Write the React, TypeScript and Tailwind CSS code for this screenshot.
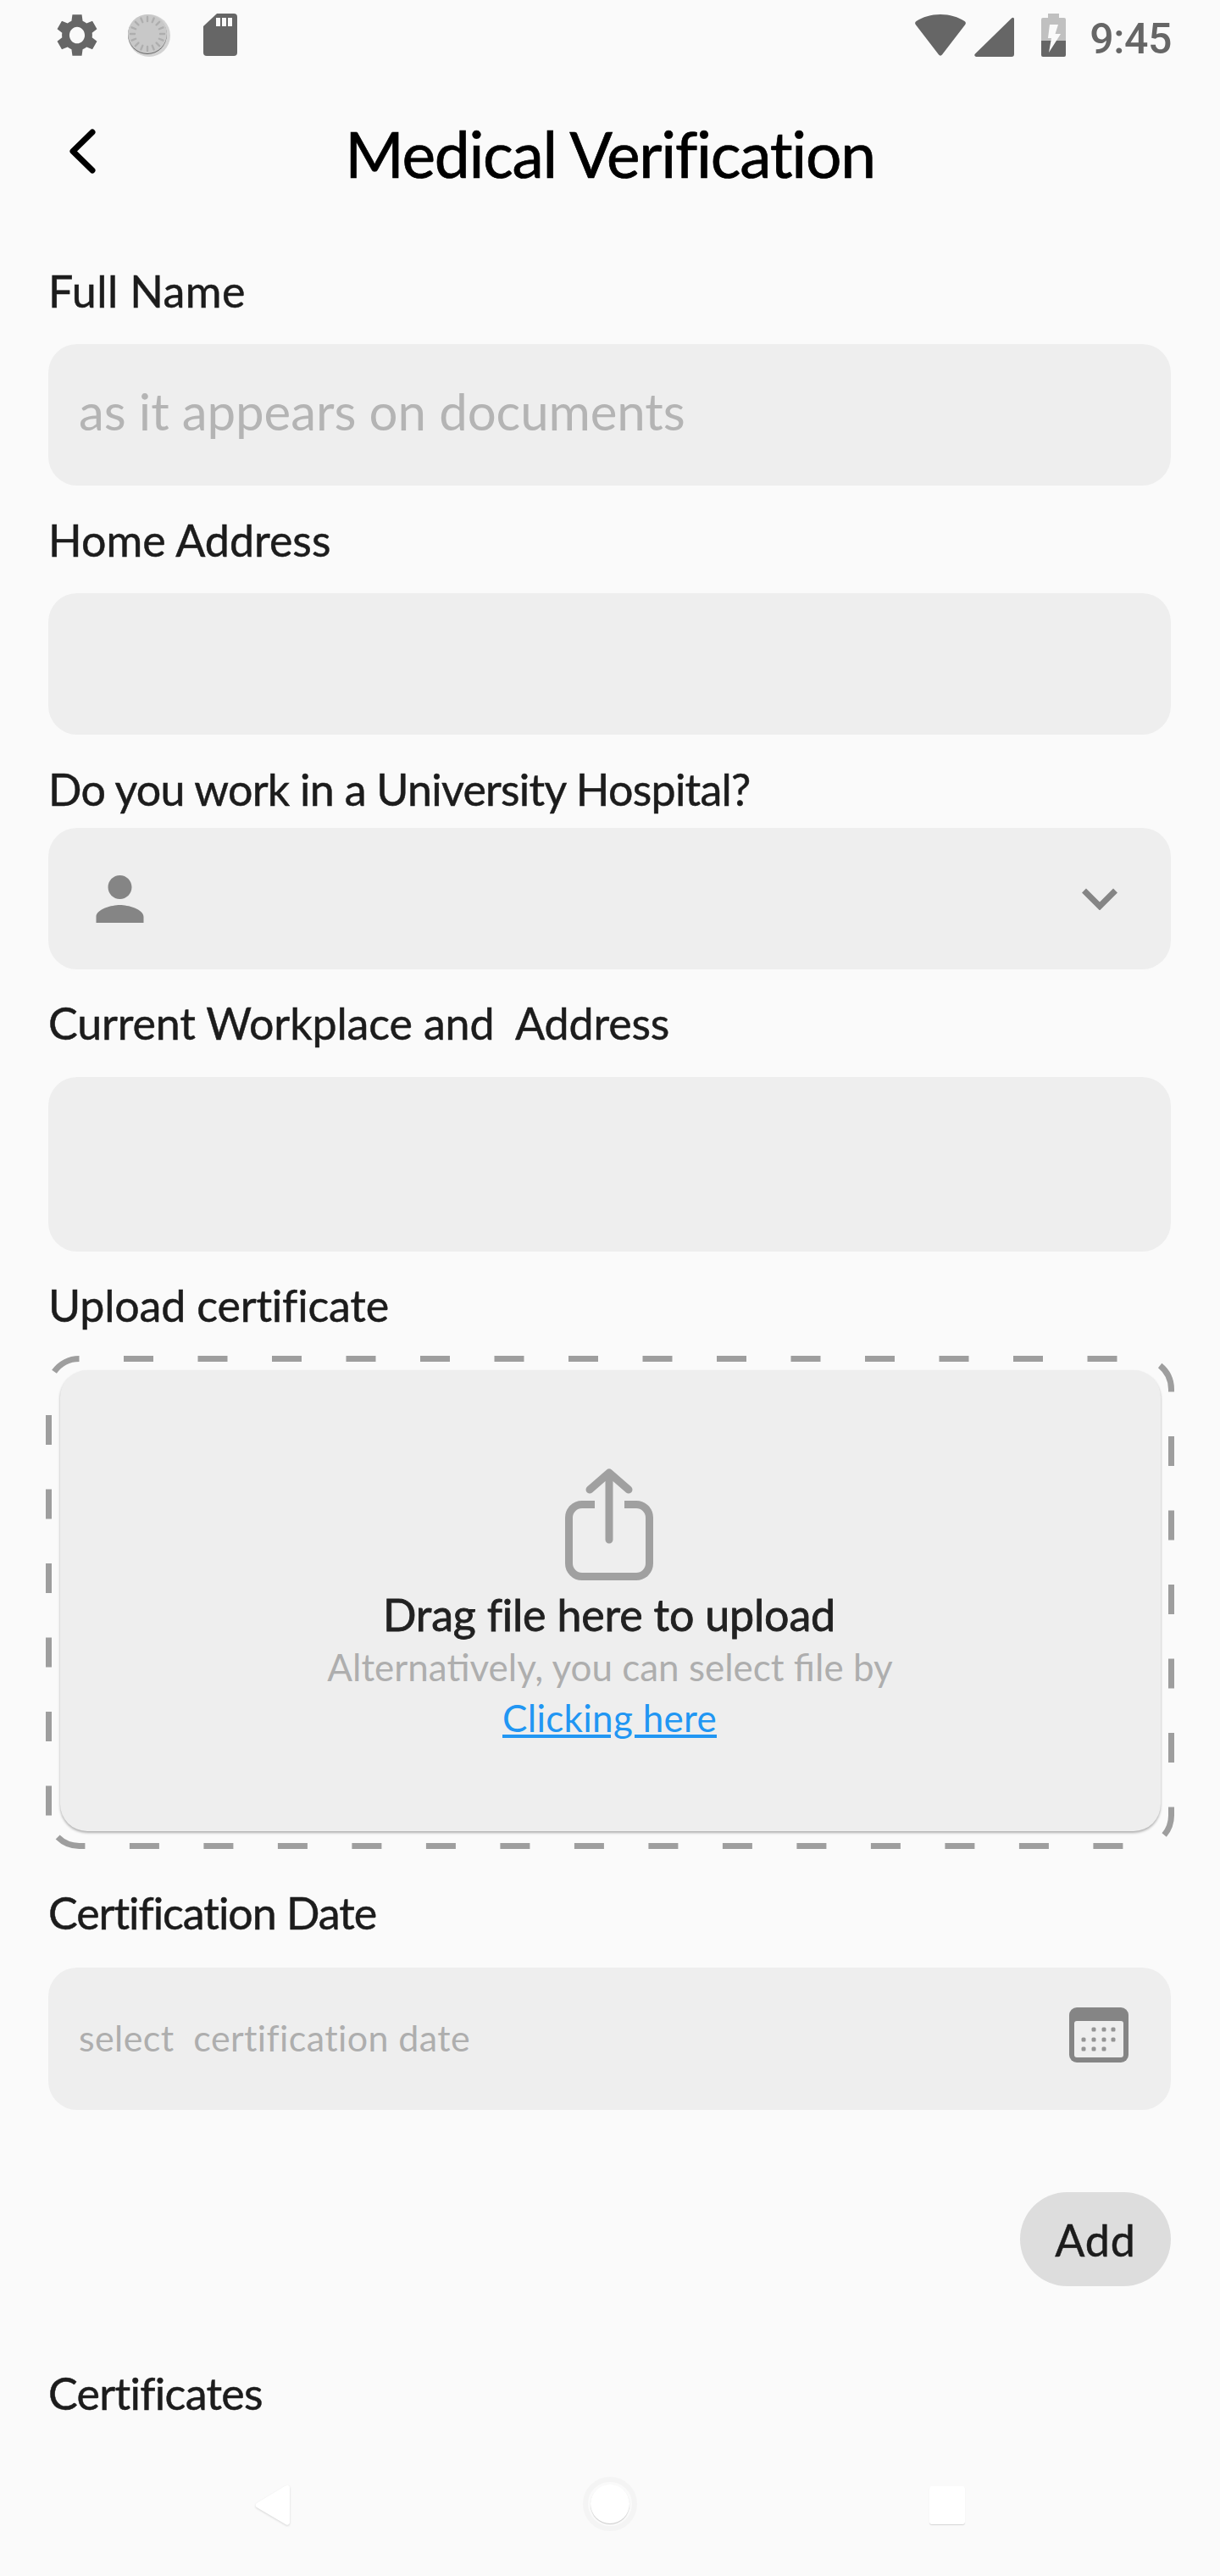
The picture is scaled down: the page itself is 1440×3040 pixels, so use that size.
const font = "font-['Lato','Liberation_Sans',sans-serif]";

function Label({ children, className = "" }: { children: React.ReactNode; className?: string }) {
  return <div className={`text-[52px] leading-[60px] [-webkit-text-stroke:0.5px_#1c1c1c] text-[#1c1c1c] whitespace-pre ${className}`}>{children}</div>;
}

function StatusBar() {
  return (
    <div className="flex items-start justify-between h-[84px] pl-[66px] pr-[57px] pt-[16px]">
      <div className="flex items-start">
        <svg width="50" height="51" viewBox="1 1 22 22.5" className="fill-[#666666]">
          <path fillRule="evenodd" d="M19.800 13.450c.05-.4.1-.8.1-1.200s-.05-.8-.1-1.200l2.550-2-2.400-4.200-3 1.200c-.65-.5-1.300-.9-2.050-1.200L14.450 1.600h-4.900l-.45 3.250c-.75.3-1.450.7-2.050 1.200l-3-1.200-2.400 4.200 2.550 2c-.05.4-.1.8-.1 1.200s.05.8.1 1.200L1.650 15.450l2.400 4.200 3-1.200c.65.5 1.300.9 2.050 1.200l.45 3.250h4.900l.45-3.250c.75-.3 1.450-.7 2.050-1.200l3 1.200 2.400-4.200-2.550-2zM12 16.600c-2.200 0-4-1.950-4-4.350s1.800-4.350 4-4.350 4 1.950 4 4.350-1.800 4.350-4 4.350z" />
        </svg>
        <svg width="52" height="52" viewBox="0 0 52 52" className="ml-[34px]">
          <circle cx="26" cy="26" r="25" fill="#d2d2d2" />
          <circle cx="24" cy="25" r="23" fill="#666666" />
          <circle cx="24" cy="24" r="23" fill="#c8c8c8" />
          {Array.from({ length: 16 }).map((_, i) => (
            <line key={i} x1="24" y1="4" x2="24" y2="9" stroke="#aeaeae" strokeWidth="2.400" strokeLinecap="round" transform={`rotate(${i * 22.5} 24 24)`} />
          ))}
        </svg>
        <svg width="40" height="50" viewBox="0 0 40 50" className="ml-[38px]">
          <path d="M16 0h20a4 4 0 0 1 4 4v42a4 4 0 0 1-4 4H4a4 4 0 0 1-4-4V15z" fill="#666666" />
          <rect x="15" y="5" width="5" height="10" fill="#fafafa" />
          <rect x="22" y="5" width="5" height="10" fill="#fafafa" />
          <rect x="29" y="5" width="5" height="10" fill="#fafafa" />
        </svg>
      </div>
      <div className="flex items-start">
        <svg width="60" height="49" viewBox="0 0 60 49" className="mt-[1px]">
          <path d="M30 0c11 0 21 3 28.500 8 1.500 1 1.800 2.500.8 4L32 47.500c-1 1.500-3 1.500-4 0L.7 12c-1-1.500-.7-3 .8-4C9 3 19 0 30 0z" fill="#666666" />
        </svg>
        <svg width="47" height="47" viewBox="0 0 47 47" className="ml-[10px] mt-[4px]">
          <path d="M44 1.500c1.500-1.500 3-.5 3 1V44a3 3 0 0 1-3 3H2.500C.5 47-.5 45 1 43.500z" fill="#666666" />
        </svg>
        <svg width="29" height="51" viewBox="0 0 29 51" className="ml-[32px]">
          <path d="M8 0h13v5h6a2 2 0 0 1 2 2v25H0V7a2 2 0 0 1 2-2h6z" fill="#c0c0c0" />
          <path d="M0 32h29v17a2 2 0 0 1-2 2H2a2 2 0 0 1-2-2z" fill="#666666" />
          <path d="M10 13h10l-3.500 11H23L9 46l3-17H8z" fill="#fafafa" />
        </svg>
        <span className="ml-[28px] text-[50px] leading-[60px] font-medium text-[#666666] font-['Roboto',sans-serif] tracking-[-0.4px]">9:45</span>
      </div>
    </div>
  );
}

function Field({ className = "", children }: { className?: string; children?: React.ReactNode }) {
  return <div className={`bg-[#eeeeee] rounded-[34px] ${className}`}>{children}</div>;
}

export default function App() {
  return (
    <div className={`relative flex flex-col h-[3040px] w-[1440px] overflow-hidden bg-[#fafafa] ${font}`}>
      <StatusBar />
      <div className="relative flex items-center justify-center h-[198px] pb-[4px]">
        <svg width="33" height="53" viewBox="0 0 33 53" className="absolute left-[81px] top-[68px]">
          <path d="M28 4 5 26.500 28 49" fill="none" stroke="#000" strokeWidth="7" strokeLinecap="round" strokeLinejoin="round" />
        </svg>
        <div className="text-[75px] leading-[80px] tracking-[-1.3px] [-webkit-text-stroke:0.7px_#000] text-black">Medical Verification</div>
      </div>
      <div className="flex flex-col pl-[57px] pr-[58px]">
        <Label className="mt-[31px] tracking-[0.4px]">Full Name</Label>
        <Field className="h-[167px] mt-[33px] pl-[36px] pb-[9px] flex items-center">
          <span className="text-[60px] tracking-[-0.1px] text-[#b4b4b4] leading-[70px]">as it appears on documents</span>
        </Field>
        <Label className="mt-[34px] tracking-[0px]">Home Address</Label>
        <Field className="h-[167px] mt-[33px]" />
        <Label className="mt-[34px] tracking-[-0.75px]">Do you work in a University Hospital?</Label>
        <Field className="h-[167px] mt-[16px] flex items-center justify-between pl-[56px] pr-[63px]">
          <svg width="57" height="56" viewBox="4 4 16 16" className="fill-[#858585]">
            <path d="M12 12c2.210 0 4-1.790 4-4s-1.790-4-4-4-4 1.790-4 4 1.790 4 4 4zm0 2c-2.670 0-8 1.340-8 4v2h16v-2c0-2.660-5.330-4-8-4z" />
          </svg>
          <svg width="42" height="26" viewBox="0 0 42 26">
            <path d="M2.500 3 21 21.500 39.500 3" fill="none" stroke="#858585" strokeWidth="7" />
          </svg>
        </Field>
        <Label className="mt-[33px] mb-[1px] tracking-[-0.15px]">Current Workplace and  Address</Label>
        <Field className="h-[206px] mt-[33px]" />
        <Label className="mt-[33px] tracking-[-0.2px]">Upload certificate</Label>
        <div className="relative mt-[30px] h-[582px] ml-[-3px] mr-[-4px]">
          <svg className="absolute left-0 top-0" width="1332" height="582" viewBox="54 1599 1332 582">
            <path d="M146 1602.500H1346.500a36 36 0 0 1 36 36V2141.500a36 36 0 0 1-36 36H93.500a36 36 0 0 1-36-36" fill="none" stroke="#9e9e9e" strokeWidth="7" strokeDasharray="35 52.500" />
            <path d="M57.500 2141.500V1638.500a36 36 0 0 1 36-36" fill="none" stroke="#9e9e9e" strokeWidth="7" strokeDasharray="35 52.500" />
          </svg>
          <div className="absolute left-[17px] right-[16px] top-[17px] bottom-[21px] bg-[#eeeeee] rounded-[32px] shadow-[0_2px_3px_rgba(0,0,0,0.3)] flex flex-col items-center pt-[116px]">
            <svg width="104" height="132" viewBox="0 0 104 132" className="mr-[3px]">
              <path d="M35 42.500H20a15.500 15.500 0 0 0-15.500 15.500V112a15.500 15.500 0 0 0 15.500 15.500H84a15.500 15.500 0 0 0 15.500-15.500V58a15.500 15.500 0 0 0-15.500-15.500H70" fill="none" stroke="#a0a0a0" strokeWidth="9" />
              <path d="M52 84V5M29 25 52 5 75 25" fill="none" stroke="#a0a0a0" strokeWidth="9" strokeLinecap="round" strokeLinejoin="round" />
            </svg>
            <div className="mt-[10px] mr-[3px] text-[52px] leading-[60px] [-webkit-text-stroke:0.8px_#212121] tracking-[-0.2px] text-[#212121]">Drag file here to upload</div>
            <div className="mt-[2px] mr-[1px] text-[44px] leading-[60px] tracking-[0px] text-[#aeaeae]">Alternatively, you can select file by</div>
            <div className="mr-[2px] text-[44px] leading-[60px] tracking-[0.3px] text-[#2196f3] underline">Clicking here</div>
          </div>
        </div>
        <Label className="mt-[45px] tracking-[-1.05px]">Certification Date</Label>
        <Field className="h-[168px] mt-[35px] flex items-center justify-between pl-[36px] pr-[50px]">
          <span className="mb-[2px] text-[43px] leading-[50px] tracking-[0.4px] text-[#aeaeae] whitespace-pre">select  certification date</span>
          <svg width="70" height="65" viewBox="0 0 70 65" className="mb-[9px]">
            <rect width="70" height="65" rx="9" fill="#858585" />
            <rect x="6" y="16" width="58" height="43" rx="3" fill="#eeeeee" />
            {[[29, 26], [41, 26], [52, 26], [17, 38], [29, 38], [41, 38], [52, 38], [17, 49], [29, 49], [41, 49]].map(([x, y], i) => (
              <rect key={i} x={x - 2.5} y={y - 2.5} width="5" height="5" rx="1.500" fill="#959595" />
            ))}
          </svg>
        </Field>
        <div className="flex justify-end mt-[97px]">
          <div className="flex items-center justify-center w-[178px] h-[111px] rounded-full bg-[#dddddd] text-[52px] tracking-[0.8px] [-webkit-text-stroke:0.5px_#1c1c1c] text-[#1c1c1c]">Add</div>
        </div>
        <Label className="mt-[96px] tracking-[-0.7px]">Certificates</Label>
      </div>
      <div className="mt-auto h-[107px] flex items-start pl-[301px]">
        <svg width="41" height="48" viewBox="0 0 41 48" className="drop-shadow-[0_1px_1px_rgba(0,0,0,0.15)]">
          <path d="M38 0a3 3 0 0 1 3 3V44a3 3 0 0 1-5 2L2 26a3 3 0 0 1 0-5L35 1z" fill="#ffffff" />
        </svg>
        <div className="ml-[346px] mt-[-10px] w-[64px] h-[64px] rounded-full border-[6px] border-[#f4f4f4] flex items-center justify-center">
          <div className="w-[46px] h-[46px] rounded-full bg-white shadow-[0_1px_1px_rgba(0,0,0,0.2)]" />
        </div>
        <div className="ml-[345px] mt-[1px] w-[42px] h-[45px] rounded-[3px] bg-white shadow-[0_1px_1px_rgba(0,0,0,0.15)]" />
      </div>
    </div>
  );
}
